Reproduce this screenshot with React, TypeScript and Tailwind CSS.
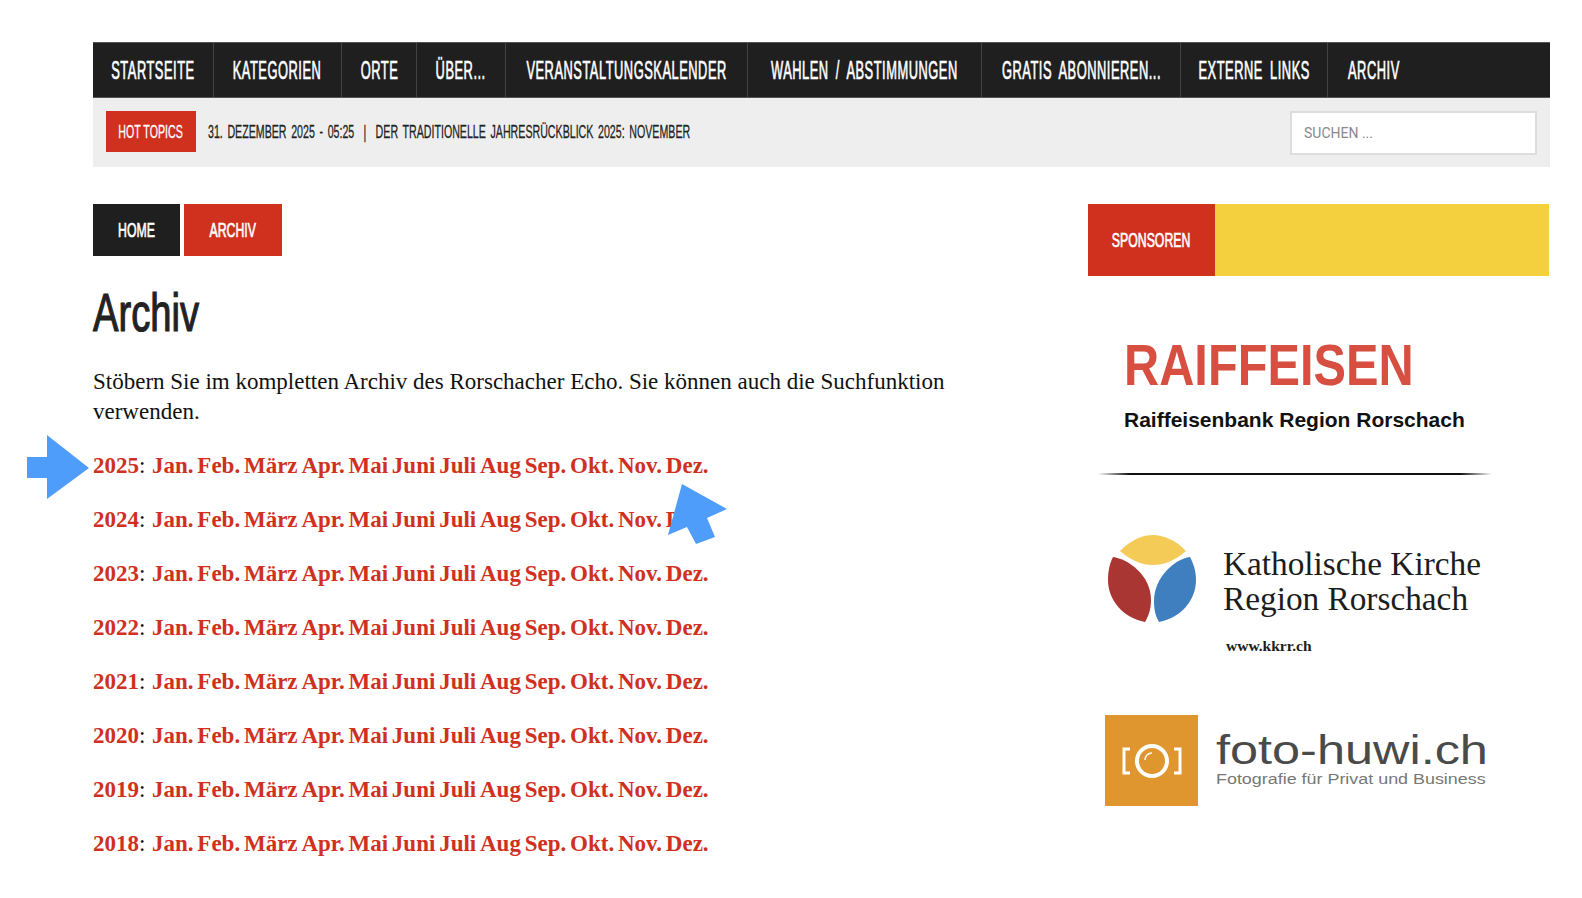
const navItems = [
  { label: "STARTSEITE", w: "w-[121px]" },
  { label: "KATEGORIEN", w: "w-[128px]" },
  { label: "ORTE", w: "w-[75px]" },
  { label: "ÜBER...", w: "w-[89px]" },
  { label: "VERANSTALTUNGSKALENDER", w: "w-[242px]" },
  { label: "WAHLEN / ABSTIMMUNGEN", w: "w-[234px]" },
  { label: "GRATIS ABONNIEREN...", w: "w-[199px]" },
  { label: "EXTERNE LINKS", w: "w-[147px]" },
];

const years = [2025, 2024, 2023, 2022, 2021, 2020, 2019, 2018];
const months = ["Jan.", "Feb.", "März", "Apr.", "Mai", "Juni", "Juli", "Aug", "Sep.", "Okt.", "Nov.", "Dez."];

const sans = "font-['Liberation_Sans',sans-serif]";
// no condensed font installed, so squeeze the sans and thicken it with a stroke
const narrow = "inline-block whitespace-pre scale-x-[0.585] [-webkit-text-stroke:0.7px]";
const navText = "inline-block whitespace-pre scale-x-[0.515] tracking-[1px] [word-spacing:6px] [-webkit-text-stroke:0.7px]";

const KirchenLogo = () => (
  <svg width="88" height="88" viewBox="0 0 88 88" className="shrink-0">
    <path d="M12 16 C24 4 35 0 45 0 C55 0 68 5 78 16 C66 26 56 30 45 30 C34 30 24 26 12 16Z" fill="#f4cb57" />
    <path d="M5 22 C20 24 43 40 43 65 C43 75 40 82 37 87 C15 83 0 65 0 45 C0 35 2 28 5 22Z" fill="#a93632" />
    <path d="M82 22 C67 24 46 42 46 66 C46 76 48 82 51 87 C73 83 88 65 88 45 C88 35 85 28 82 22Z" fill="#3f7fbf" />
  </svg>
);

const CameraLogo = () => (
  <div className="w-[93px] h-[91px] bg-[#e0962e] flex items-center justify-center shrink-0">
    <svg width="60" height="36" viewBox="0 0 60 36" fill="none" stroke="#fff">
      <path d="M8 6H2V30H8M52 6H58V30H52" strokeWidth="3" />
      <circle cx="30" cy="18" r="15" strokeWidth="4" />
      <path d="M23 17C23 13 26 10 30 10" strokeWidth="1.5" />
    </svg>
  </div>
);

export default function App() {
  return (
    <div className="relative w-[1582px] h-[898px] overflow-hidden bg-white pl-[93px] pr-[32px] pt-[42px] text-[#222]">
      <nav className={`flex h-[56px] bg-[#1f1f1f] border-t border-b border-[#555] text-white ${sans}`}>
        {navItems.map((item) => (
          <a
            key={item.label}
            className={`${item.w} flex items-center justify-center pt-[2px] text-[25px] border-r border-[#444]`}
          >
            <span className={navText}>{item.label}</span>
          </a>
        ))}
        <a className="flex-1 pl-[20px] pt-[2px] flex items-center text-[25px]">
          <span className="inline-block whitespace-pre origin-left scale-x-[0.515] tracking-[1px] [-webkit-text-stroke:0.7px]">ARCHIV</span>
        </a>
      </nav>

      <div className="flex items-center justify-between h-[69px] bg-[#eeeeee] px-[13px]">
        <div className={`flex items-center pb-[2px] ${sans}`}>
          <span className="flex items-center justify-center w-[90px] h-[41px] pt-[1px] bg-[#d0301e] text-white text-[19px]">
            <span className="inline-block whitespace-pre scale-x-[0.56] [-webkit-text-stroke:0.3px]">HOT TOPICS</span>
          </span>
          <span className="ml-[12px] pt-[1px] text-[19px] text-[#222]">
            <span className="inline-block whitespace-pre origin-left scale-x-[0.56] [word-spacing:3px] [-webkit-text-stroke:0.3px]">
              31. DEZEMBER 2025 - 05:25  |  DER TRADITIONELLE JAHRESRÜCKBLICK 2025: NOVEMBER
            </span>
          </span>
        </div>
        <input
          placeholder="SUCHEN ..."
          className="w-[247px] h-[44px] bg-white border-2 border-[#ddd] pl-[12px] text-[14px] placeholder:text-[#888] font-['Roboto',sans-serif]"
        />
      </div>

      <div className="flex justify-between mt-[37px]">
        <main className="w-[860px]">
          <div className={`flex gap-[4px] text-white text-[21px] ${sans}`}>
            <a className="w-[87px] h-[52px] pb-[1px] bg-[#1f1f1f] flex items-center justify-center">
              <span className={narrow}>HOME</span>
            </a>
            <a className="w-[98px] h-[52px] pb-[1px] bg-[#d0301e] flex items-center justify-center">
              <span className={narrow}>ARCHIV</span>
            </a>
          </div>
          <h1 className={`mt-[24px] text-[53px] leading-[66px] text-[#222] ${sans}`}>
            <span className="inline-block origin-left scale-x-[0.72] [-webkit-text-stroke:1.2px]">Archiv</span>
          </h1>
          <p className="mt-[21px] font-['Liberation_Serif',serif] text-[23px] leading-[29.5px] text-[#111]">
            Stöbern Sie im kompletten Archiv des Rorschacher Echo. Sie können auch die Suchfunktion verwenden.
          </p>
          <div className="mt-[25px] flex flex-col gap-[24px] font-['Liberation_Serif',serif] text-[23px] leading-[30px] font-bold text-[#d0301e] whitespace-nowrap">
            {years.map((year) => (
              <div key={year} className="flex">
                {year}
                <span className="font-normal text-[#111] w-[13px]">:</span>
                <div className="flex gap-[3.8px]">
                  {months.map((m) => (
                    <a key={m}>{m}</a>
                  ))}
                </div>
              </div>
            ))}
          </div>
        </main>

        <aside className="w-[461px] mr-[1px]">
          <div className="flex h-[72px] bg-[#f4d03f]">
            <div className={`w-[127px] bg-[#d0301e] text-white text-[21px] flex items-center justify-center ${sans}`}>
              <span className={narrow}>SPONSOREN</span>
            </div>
          </div>

          <div className="mt-[64px] pl-[36px]">
            <div className={`${sans} font-bold text-[#d64f40] text-[58px] leading-[50px]`}>
              <span className="inline-block origin-left scale-x-[0.84]">RAIFFEISEN</span>
            </div>
            <div className={`mt-[18px] ${sans} font-bold text-[#111] text-[21px] leading-[24px]`}>Raiffeisenbank Region Rorschach</div>
            <div className="mt-[41px] ml-[-26px] w-[394px] h-[2px] bg-[linear-gradient(90deg,transparent,#111_8%,#111_92%,transparent)]" />
          </div>

          <div className="mt-[60px] ml-[20px] flex">
            <KirchenLogo />
            <div className="ml-[27px] pt-[12px] font-['Liberation_Serif',serif] text-[#1c1c1c]">
              <div className="text-[33.3px] leading-[34.5px]">Katholische Kirche</div>
              <div className="text-[33.3px] leading-[34.5px]">Region Rorschach</div>
              <div className="mt-[22px] ml-[3px] text-[15.5px] leading-[16px] font-bold">www.kkrr.ch</div>
            </div>
          </div>

          <div className="mt-[61px] ml-[17px] flex items-center">
            <CameraLogo />
            <div className={`ml-[18px] pb-[6px] ${sans} text-[#4a4a4a]`}>
              <div className="text-[41px] leading-[42px]">
                <span className="inline-block origin-left scale-x-[1.23]">foto-huwi.ch</span>
              </div>
              <div className="text-[15.5px] leading-[16px] text-[#777]">
                <span className="inline-block whitespace-pre origin-left scale-x-[1.155]">Fotografie für Privat und Business</span>
              </div>
            </div>
          </div>
        </aside>
      </div>

      <svg className="absolute left-0 top-0 pointer-events-none" width="800" height="600">
        <polygon points="27,457 47,457 47,435 89,468 47,499 47,478 27,478" fill="#4f9dfb" />
        <polygon points="682,484 727,509 707,518 715,537 696,544 687,527 668,535" fill="#4f9dfb" />
      </svg>
    </div>
  );
}
